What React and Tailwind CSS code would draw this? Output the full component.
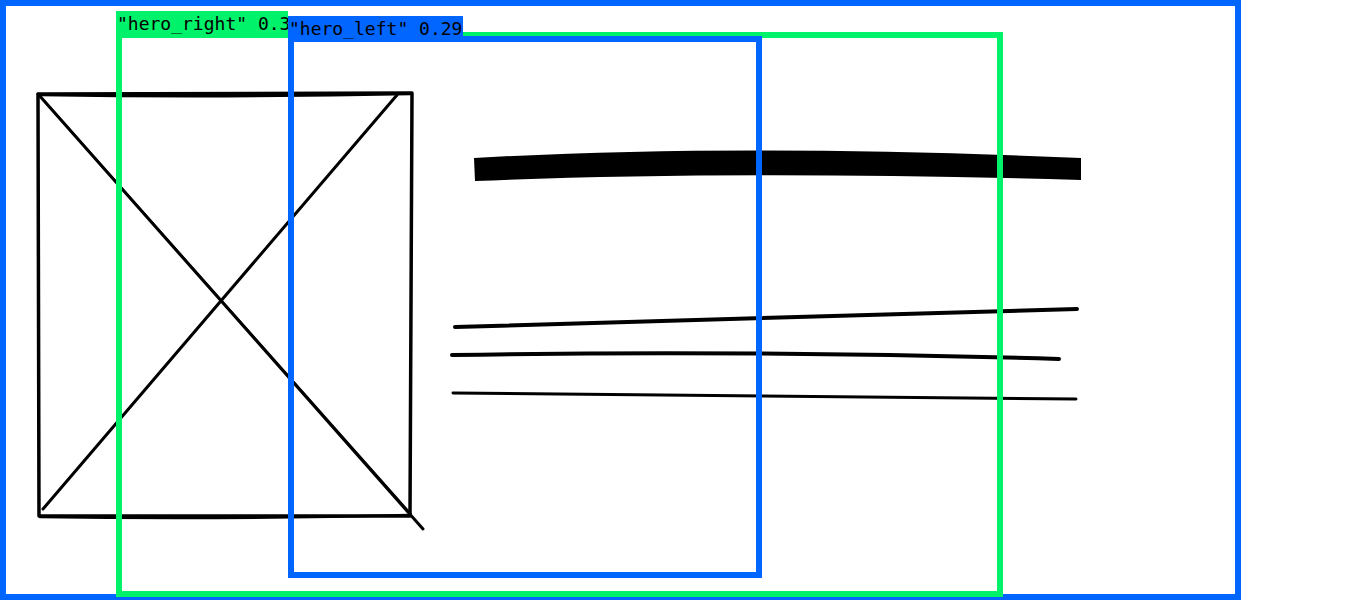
const detections = [
  { id: 'hero_right', score: '0.36', box: 'left-[116px] top-[32px] w-[887px] h-[565px] border-[#00f26a]', tag: 'left-[116px] top-[11px] w-[172px] bg-[#00f26a]' },
  { id: 'hero_left', score: '0.29', box: 'left-[288px] top-[36px] w-[474px] h-[542px] border-[#0066ff]', tag: 'left-[288px] top-[16px] bg-[#0066ff]' },
];

function ImageSketch() {
  return (
    <svg width="400" height="450" viewBox="30 85 400 450" className="shrink-0">
      <g fill="none" stroke="#000" strokeLinecap="round" strokeLinejoin="round">
        <path d="M38 94 L412 93 L410 516 L39 516 Z" strokeWidth="3.5" />
        <path d="M40 95 Q220 98 411 94" strokeWidth="2.5" />
        <path d="M40 517 Q220 520 409 515" strokeWidth="2.5" />
        <path d="M38 94 L423 529" strokeWidth="3" />
        <path d="M40 96 L411 514" strokeWidth="2" />
        <path d="M397 95 L43 509" strokeWidth="3" />
      </g>
    </svg>
  );
}

function TextSketch() {
  return (
    <svg width="645" height="270" viewBox="445 140 645 270" className="shrink-0">
      <path d="M474 158 Q740 143 1081 158 L1081 180 Q740 170 475 181 Z" fill="#000" />
      <g fill="none" stroke="#000" strokeLinecap="round">
        <path d="M455 327 L1077 309" strokeWidth="4" />
        <path d="M452 355 Q750 350 1059 359" strokeWidth="4" />
        <path d="M453 393 L1076 399" strokeWidth="3" />
      </g>
    </svg>
  );
}

function App() {
  return (
    <div className="relative w-[1366px] h-[600px] bg-white font-['DejaVu_Sans_Mono',monospace]">
      <div className="w-[1241px] h-[600px] border-[6px] border-[#0066ff]">
        <div className="flex items-start pl-[24px] pt-[79px] gap-[15px]">
          <ImageSketch />
          <div className="pt-[55px]">
            <TextSketch />
          </div>
        </div>
      </div>

      {detections.map(d => (
        <div key={d.id}>
          <div className={`absolute border-[6px] ${d.box}`} />
          <div className={`absolute h-[26px] px-[1px] overflow-hidden text-[18px] leading-[26px] text-black whitespace-nowrap ${d.tag}`}>
            "{d.id}" {d.score}
          </div>
        </div>
      ))}
    </div>
  );
}

export default App;
